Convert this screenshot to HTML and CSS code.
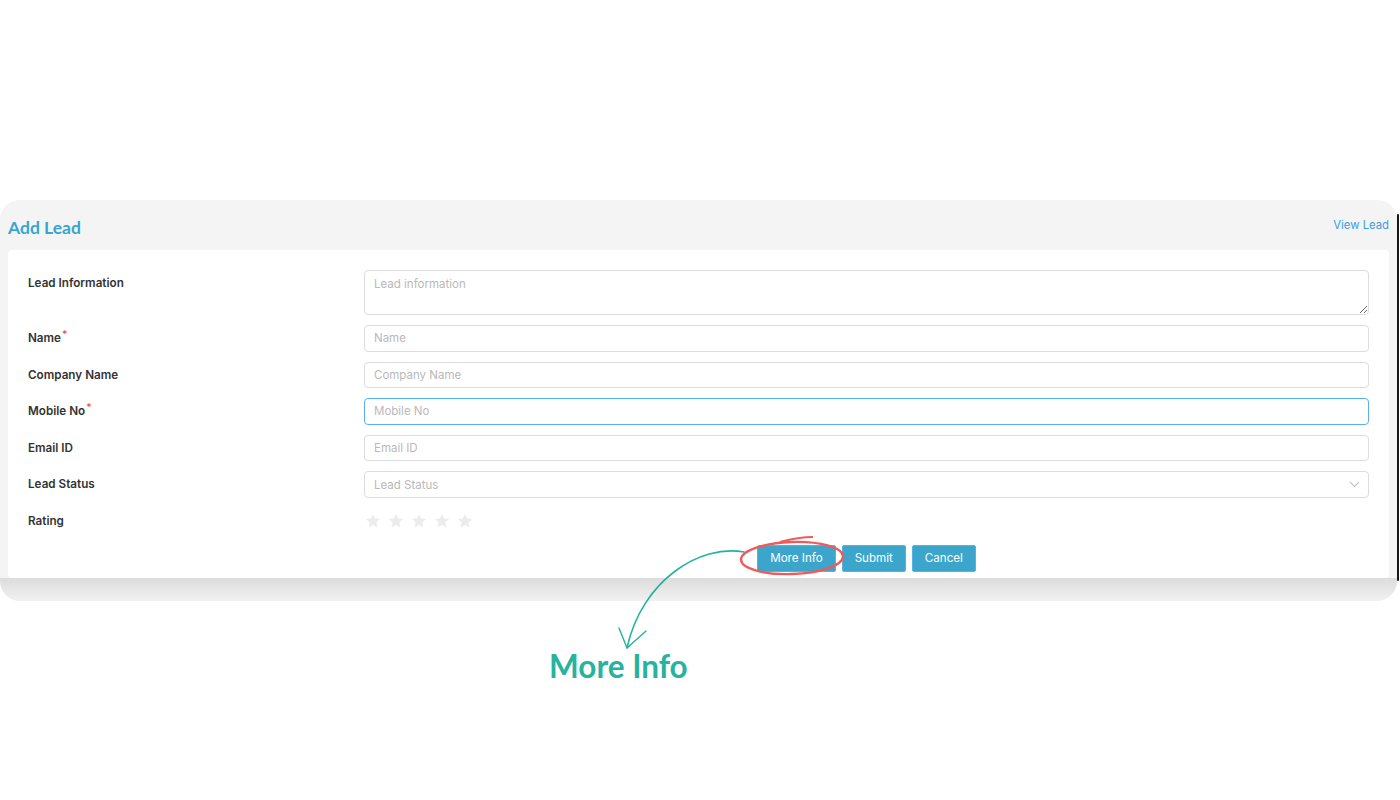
FILE: index.html
```html
<!DOCTYPE html>
<html lang="en">
<head>
<meta charset="utf-8">
<title>Add Lead</title>
<link rel="stylesheet" href="styles.css">
</head>
<body>
<div class="panel">
  <div class="panel-head">
    <h1 class="title">Add Lead</h1>
    <a class="view-link" href="#">View Lead</a>
  </div>
  <div class="card">
    <form class="form">
      <label class="lbl">Lead Information</label>
      <textarea class="field area" placeholder="Lead information"></textarea>

      <label class="lbl">Name<span class="req">*</span></label>
      <input class="field" type="text" placeholder="Name">

      <label class="lbl">Company Name</label>
      <input class="field" type="text" placeholder="Company Name">

      <label class="lbl">Mobile No<span class="req">*</span></label>
      <input class="field focus" type="text" placeholder="Mobile No">

      <label class="lbl">Email ID</label>
      <input class="field" type="text" placeholder="Email ID">

      <label class="lbl">Lead Status</label>
      <div class="field select">
        <span class="ph">Lead Status</span>
        <svg class="chev" width="11" height="7" viewBox="0 0 11 7"><path d="M1 1l4.5 4.5L10 1" fill="none" stroke="#c4c4c4" stroke-width="1.1"/></svg>
      </div>

      <label class="lbl">Rating</label>
      <div class="stars">
        <svg class="star" viewBox="0 0 24 24"><path d="M12 2.5l2.9 6.1 6.6.8-4.9 4.6 1.3 6.6L12 17.3l-5.9 3.3 1.3-6.6L2.5 9.4l6.6-.8z"/></svg>
        <svg class="star" viewBox="0 0 24 24"><path d="M12 2.5l2.9 6.1 6.6.8-4.9 4.6 1.3 6.6L12 17.3l-5.9 3.3 1.3-6.6L2.5 9.4l6.6-.8z"/></svg>
        <svg class="star" viewBox="0 0 24 24"><path d="M12 2.5l2.9 6.1 6.6.8-4.9 4.6 1.3 6.6L12 17.3l-5.9 3.3 1.3-6.6L2.5 9.4l6.6-.8z"/></svg>
        <svg class="star" viewBox="0 0 24 24"><path d="M12 2.5l2.9 6.1 6.6.8-4.9 4.6 1.3 6.6L12 17.3l-5.9 3.3 1.3-6.6L2.5 9.4l6.6-.8z"/></svg>
        <svg class="star" viewBox="0 0 24 24"><path d="M12 2.5l2.9 6.1 6.6.8-4.9 4.6 1.3 6.6L12 17.3l-5.9 3.3 1.3-6.6L2.5 9.4l6.6-.8z"/></svg>
      </div>

      <div class="actions">
        <button type="button" class="btn">More Info</button>
        <button type="button" class="btn">Submit</button>
        <button type="button" class="btn">Cancel</button>
      </div>
    </form>
  </div>
</div>

<div class="note">More Info</div>

<svg class="annot" width="1400" height="800" viewBox="0 0 1400 800">
  <ellipse cx="792" cy="558" rx="51" ry="16" transform="rotate(-2 792 558)" fill="none" stroke="#f15a5a" stroke-width="2.4"/>
  <path d="M780 542 C 795 538, 805 537, 813 537" fill="none" stroke="#f15a5a" stroke-width="2"/>
  <path d="M744 552 C 700 544, 642 580, 627 648" fill="none" stroke="#22b39d" stroke-width="1.6" stroke-linecap="round"/>
  <path d="M619 628 L627 648 L646 631" fill="none" stroke="#22b39d" stroke-width="1.4" stroke-linecap="round" stroke-linejoin="round"/>
</svg>
</body>
</html>
```

FILE: styles.css
```css
* { box-sizing: border-box; }

html, body {
  margin: 0;
  padding: 0;
  background: #ffffff;
}

body {
  width: 1400px;
  height: 800px;
  position: relative;
  overflow: hidden;
  font-family: Inter, "Liberation Sans", sans-serif;
}

.panel {
  position: relative;
  margin-top: 200px;
  width: 1397px;
  border-radius: 20px;
  padding: 0 8px 23px 8px;
  background:
    linear-gradient(#f4f4f4, #f4f4f4) top left / 100% calc(100% - 23px) no-repeat,
    linear-gradient(#dcdcdc, #f1f1f1) bottom left / 100% 23px no-repeat;
}

.panel::after {
  content: "";
  position: absolute;
  right: -2px;
  top: 14px;
  bottom: 20px;
  width: 2px;
  background: #151515;
  border-radius: 1px;
}

.panel-head {
  height: 50px;
  padding-top: 18px;
  display: flex;
  justify-content: space-between;
  align-items: flex-start;
}

.title {
  margin: 0;
  font-family: Lato, "Open Sans", sans-serif;
  font-weight: 700;
  font-size: 17.5px;
  line-height: 20px;
  color: #37a6cf;
}

.view-link {
  font-family: Inter, sans-serif;
  font-size: 11.3px;
  line-height: 14px;
  color: #3b9be6;
  text-decoration: none;
}

.card {
  background: #ffffff;
  border-radius: 4px;
  padding: 20px 20px 6px 20px;
}

.form {
  display: grid;
  grid-template-columns: 336px 1fr;
  row-gap: 10px;
}

.lbl {
  font-size: 11.7px;
  font-weight: 600;
  color: #333333;
  line-height: 26.6px;
  height: 26.6px;
}

.req {
  position: relative;
  top: -4px;
  color: #f0554f;
  font-size: 10px;
  line-height: 0;
  margin-left: 1px;
}

.field {
  display: block;
  width: 100%;
  height: 26.6px;
  border: 1px solid #dcdcdc;
  border-radius: 4px;
  padding: 0 9px;
  font-family: Inter, sans-serif;
  font-size: 11.5px;
  color: #333;
  background: #fff;
  outline: none;
}

.field::placeholder,
.ph {
  color: #b9b9b9;
  font-size: 11.5px;
}

.area {
  height: 45px;
  padding-top: 6px;
  line-height: 14px;
  resize: vertical;
}

.focus {
  border-color: #5aaef2;
}

.select {
  display: flex;
  align-items: center;
  justify-content: space-between;
  padding-right: 8px;
}

.chev { display: block; }

.stars {
  height: 26px;
  display: flex;
  align-items: center;
  gap: 5px;
}

.star {
  width: 18px;
  height: 18px;
  fill: #ececec;
}

.actions {
  grid-column: 2;
  display: flex;
  justify-content: center;
  gap: 6px;
}

.btn {
  height: 27px;
  padding: 0 12px;
  background: #3ca5cc;
  border: 1px solid #55b3e3;
  border-radius: 2px;
  color: #ffffff;
  font-family: Inter, sans-serif;
  font-size: 11.6px;
  line-height: 25px;
}

.note {
  margin-top: 47px;
  padding-left: 549px;
  font-family: Lato, "Open Sans", sans-serif;
  font-weight: 700;
  font-size: 31.5px;
  line-height: 36px;
  color: #26b3a0;
}

.annot {
  position: absolute;
  left: 0;
  top: 0;
  pointer-events: none;
}
```
